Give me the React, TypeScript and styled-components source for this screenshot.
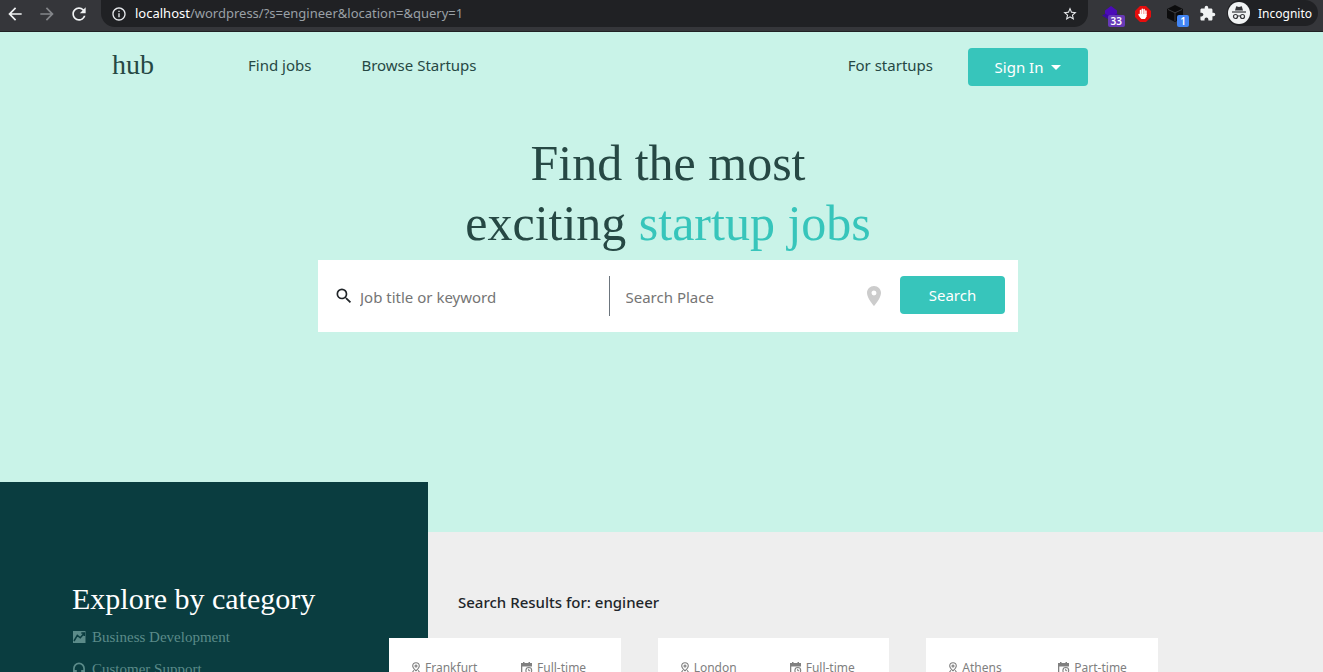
import React from "react";
import styled, { createGlobalStyle } from "styled-components";
import {
  MdArrowBack,
  MdArrowForward,
  MdRefresh,
  MdInfoOutline,
  MdStarBorder,
  MdExtension,
  MdSearch,
  MdLocationOn,
} from "react-icons/md";

const sans = `"Noto Sans", "Open Sans", sans-serif`;
const serif = `"Liberation Serif", "Times New Roman", serif`;
const teal = "#37c5bb";
const ink = "#264844";

const GlobalStyle = createGlobalStyle`
  * { box-sizing: border-box; }
  body { margin: 0; font-family: ${sans}; }
  button, input { font-family: inherit; margin: 0; }
  h1, h2, p, ul { margin: 0; padding: 0; font-weight: 400; }
  ul { list-style: none; }
  a { color: inherit; text-decoration: none; }
  svg { display: block; flex: none; }
`;

const Window = styled.div`
  display: flex;
  flex-direction: column;
  height: 100vh;
  overflow: hidden;
  background: #eeeeee;
`;

/* Browser toolbar */

const Toolbar = styled.div`
  display: flex;
  flex: none;
  align-items: flex-start;
  height: 32px;
  padding: 0 5px;
  background: #35363a;
  border-bottom: 1px solid #202124;
`;

const ToolButton = styled.button<{ $dim?: boolean }>`
  display: flex;
  align-items: center;
  justify-content: center;
  width: 32px;
  height: 27px;
  padding: 0;
  border: 0;
  background: none;
  color: ${(p) => (p.$dim ? "#84868a" : "#f1f3f4")};
`;

const NavButtons = styled.div`
  display: flex;
  width: 96px;
  margin-left: -6px;
  margin-right: 6px;
`;

const AddressBar = styled.div`
  display: flex;
  flex: 1;
  align-items: center;
  height: 27px;
  padding: 0 10px;
  gap: 8px;
  background: #202124;
  border-radius: 0 0 14px 14px;
  color: #e8eaed;
`;

const Address = styled.p`
  flex: 1;
  padding-bottom: 2px;
  font-size: 13px;
  line-height: 24px;
  color: #9aa0a6;

  b {
    font-weight: 400;
    color: #ffffff;
  }
`;

const Extensions = styled.div`
  display: flex;
  width: 128px;
  margin-left: 7px;
`;

const Extension = styled(ToolButton)`
  position: relative;
`;

const Count = styled.span<{ $color: string }>`
  position: absolute;
  right: 2px;
  top: 15px;
  padding: 0 3px;
  border-radius: 2px;
  background: ${(p) => p.$color};
  color: #ffffff;
  font-size: 10px;
  font-weight: 600;
  line-height: 12px;
`;

const Profile = styled.button`
  display: flex;
  align-items: center;
  gap: 8px;
  height: 26px;
  margin-left: 4px;
  padding: 0 6px 0 1px;
  border: 0;
  border-radius: 13px;
  background: #202124;
  color: #ffffff;
  font-size: 12px;
`;

/* Hero */

const Hero = styled.header`
  flex: none;
  height: 500px;
  background: #c9f3e8;
  color: ${ink};
`;

const Nav = styled.nav`
  display: flex;
  align-items: flex-start;
  max-width: 1088px;
  padding: 16px 0 0 112px;
  font-size: 15px;
`;

const Brand = styled.a`
  width: 136px;
  font-family: ${serif};
  font-size: 28px;
  line-height: 34px;
`;

const NavLink = styled.a`
  margin-right: 50px;
  line-height: 34px;
`;

const EndLink = styled.a`
  margin: 0 35px 0 auto;
  line-height: 34px;
`;

const Button = styled.button<{ $width: number }>`
  display: flex;
  align-items: center;
  justify-content: center;
  gap: 8px;
  width: ${(p) => p.$width}px;
  height: 38px;
  padding: 0;
  border: 0;
  border-radius: 4px;
  background: ${teal};
  color: #ffffff;
  font-size: 15px;
`;

const Caret = styled.span`
  border: 5px solid transparent;
  border-top-color: #ffffff;
  border-bottom: 0;
`;

const HeroBody = styled.div`
  display: flex;
  flex-direction: column;
  align-items: center;
  padding: 47px 0 0 13px;
`;

const Title = styled.h1`
  font-family: ${serif};
  font-size: 50px;
  line-height: 60px;
  text-align: center;

  em {
    font-style: normal;
    color: ${teal};
  }
`;

const SearchForm = styled.form`
  display: flex;
  align-items: flex-start;
  width: 100%;
  max-width: 700px;
  height: 72px;
  margin-top: 7px;
  padding: 16px 13px 16px 16px;
  background: #ffffff;
`;

const Field = styled.label<{ $divided?: boolean }>`
  display: flex;
  align-items: center;
  flex: 1;
  height: 40px;
  padding-left: ${(p) => (p.$divided ? 16 : 0)}px;
  border-left: ${(p) => (p.$divided ? "1px solid #6c757d" : "0")};
`;

const Input = styled.input`
  flex: 1;
  min-width: 0;
  height: 40px;
  padding: 2px 0 0;
  border: 0;
  outline: 0;
  background: none;
  font-size: 15px;

  &::placeholder {
    color: #757575;
    opacity: 1;
  }
`;

const SearchIcon = styled(MdSearch)`
  margin-right: 6px;
  color: #212529;
`;

const PlaceIcon = styled(MdLocationOn)`
  margin-right: 14px;
  color: #cccccc;
`;

/* Lower page */

const Content = styled.main`
  display: flex;
  flex: none;
  align-items: flex-start;
`;

const Sidebar = styled.aside`
  width: 428px;
  min-height: 600px;
  margin-top: -50px;
  padding: 95px 72px;
  background: #0a3d40;
  font-family: ${serif};
`;

const SidebarTitle = styled.h2`
  color: #ffffff;
  font-size: 30px;
  line-height: 44px;
`;

const Category = styled.a`
  display: flex;
  align-items: center;
  gap: 6px;
  height: 32px;
  color: #5b8b89;
  font-size: 15px;
`;

const Results = styled.section`
  flex: 1;
  padding: 60px 30px;
`;

const ResultsTitle = styled.h2`
  color: #212529;
  font-size: 15px;
  font-weight: 500;
  line-height: 20px;
`;

const Cards = styled.ul`
  display: grid;
  grid-template-columns: repeat(3, 1fr);
  gap: 37px;
  max-width: 769px;
  margin: 26px 0 0 -69px;
`;

const Card = styled.li`
  display: grid;
  grid-template-columns: 110px 1fr;
  position: relative;
  min-height: 240px;
  padding: 20px 22px;
  align-content: start;
  background: #ffffff;
`;

const Meta = styled.span`
  display: flex;
  align-items: center;
  gap: 4px;
  color: #808080;
  font-size: 12px;
  line-height: 20px;
`;

const PinIcon = () => (
  <svg width="10" height="12" viewBox="0 0 10 12" fill="none" stroke="currentColor" strokeWidth="1.1">
    <path d="M5 8.800C3 7 1.700 5.700 1.700 4a3.300 3.300 0 0 1 6.600 0C8.300 5.700 7 7 5 8.800Z" />
    <circle cx="5" cy="4" r="1" />
    <path d="M2.800 8.300.8 11.400H3M7.200 8.300l2 3.100H7" />
  </svg>
);

const CalendarIcon = () => (
  <svg width="12" height="12" viewBox="0 0 12 12">
    <path fill="currentColor" d="M0 1h2V0h1.500v1h4V0H9v1h2v3.600H1.300v6.100H4V12H0Z" />
    <circle cx="7.800" cy="8.400" r="2.900" fill="#ffffff" stroke="currentColor" strokeWidth="1.100" />
    <path d="M7.700 6.800v1.900h1.500" fill="none" stroke="currentColor" />
  </svg>
);

const ChartIcon = () => (
  <svg width="14" height="12" viewBox="0 0 14 12">
    <path fill="currentColor" d="M1 0h12.500v12H1Z" />
    <path
      d="M2 10 5.300 4.300l3 2.500L12 2.500M9.300 2h3v3"
      fill="none"
      stroke="#0a3d40"
      strokeWidth="1.500"
    />
  </svg>
);

const HeadphonesIcon = () => (
  <svg width="14" height="14" viewBox="0 0 14 14" fill="none" stroke="currentColor" strokeWidth="1.700">
    <path d="M1.900 12V6.500a5.100 5.100 0 0 1 10.200 0V12" />
    <path d="M3.400 8v5M10.600 8v5" strokeWidth="2.800" />
  </svg>
);

const LayersIcon = () => (
  <svg width="18" height="18" viewBox="0 0 18 18">
    <path d="m9 6 9 4.500L9 16l-9-5.500Z" fill="#3a0a9c" />
    <path d="m9 1 6 4.500v3L9 12 3 8.500v-3Z" fill="#4b0bb8" />
  </svg>
);

const BlockerIcon = () => (
  <svg width="16" height="16" viewBox="0 0 16 16">
    <path d="M5 0h6l5 5v6l-5 5H5l-5-5V5Z" fill="#e40d0d" />
    <path
      d="M5.500 9V4.500M7.300 8V3.200M9.100 8V3.500M10.900 8.500V5M4 8.500 6.500 12"
      stroke="#ffffff"
      strokeWidth="1.500"
      strokeLinecap="round"
    />
    <path d="M4.800 8h6.800v2.500L10 13H6.700L4.800 10.500Z" fill="#ffffff" />
  </svg>
);

const CubeIcon = () => (
  <svg width="16" height="17" viewBox="0 0 16 17">
    <path d="m8 0 8 4v9l-8 4-8-4V4Z" fill="#0c0c0d" />
    <path d="m1 4.500 7 3.300 7-3.300M8 8v8" stroke="#3c3d40" fill="none" />
  </svg>
);

const IncognitoIcon = () => (
  <svg width="22" height="22" viewBox="0 0 22 22">
    <circle cx="11" cy="11" r="11" fill="#f1f3f4" />
    <path d="M7 8.500 8.200 4.300 11 5l2.800-.7L15 8.500Z" fill="#35363a" />
    <path d="M4 10h14" stroke="#35363a" strokeWidth="1.200" />
    <path d="M9.500 14.300q1.500-1 3 0" stroke="#35363a" fill="none" />
    <circle cx="7.500" cy="14.500" r="2" stroke="#35363a" fill="none" strokeWidth="1.200" />
    <circle cx="14.500" cy="14.500" r="2" stroke="#35363a" fill="none" strokeWidth="1.200" />
  </svg>
);

const jobs = [
  { city: "Frankfurt", type: "Full-time" },
  { city: "London", type: "Full-time" },
  { city: "Athens", type: "Part-time" },
];

export default function App() {
  return (
    <Window>
      <GlobalStyle />
      <Toolbar>
        <NavButtons>
          <ToolButton aria-label="Back"><MdArrowBack size={20} /></ToolButton>
          <ToolButton aria-label="Forward" $dim><MdArrowForward size={20} /></ToolButton>
          <ToolButton aria-label="Reload"><MdRefresh size={20} /></ToolButton>
        </NavButtons>
        <AddressBar>
          <MdInfoOutline size={16} />
          <Address><b>localhost</b>/wordpress/?s=engineer&amp;location=&amp;query=1</Address>
          <MdStarBorder size={16} />
        </AddressBar>
        <Extensions>
          <Extension aria-label="Layers"><LayersIcon /><Count $color="#673ab7">33</Count></Extension>
          <Extension aria-label="Blocker"><BlockerIcon /></Extension>
          <Extension aria-label="Cube"><CubeIcon /><Count $color="#4285f4">1</Count></Extension>
          <Extension aria-label="Extensions"><MdExtension size={17} /></Extension>
        </Extensions>
        <Profile><IncognitoIcon />Incognito</Profile>
      </Toolbar>

      <Hero>
        <Nav>
          <Brand href="#">hub</Brand>
          <NavLink href="#jobs">Find jobs</NavLink>
          <NavLink href="#startups">Browse Startups</NavLink>
          <EndLink href="#for-startups">For startups</EndLink>
          <Button $width={120}>Sign In<Caret /></Button>
        </Nav>
        <HeroBody>
          <Title>
            Find the most<br />exciting <em>startup jobs</em>
          </Title>
          <SearchForm onSubmit={(e) => e.preventDefault()}>
            <Field>
              <SearchIcon size={20} />
              <Input aria-label="Job title or keyword" placeholder="Job title or keyword" />
            </Field>
            <Field $divided>
              <Input aria-label="Search Place" placeholder="Search Place" />
              <PlaceIcon size={24} />
            </Field>
            <Button $width={105}>Search</Button>
          </SearchForm>
        </HeroBody>
      </Hero>

      <Content>
        <Sidebar>
          <SidebarTitle>Explore by category</SidebarTitle>
          <ul>
            <li><Category href="#business"><ChartIcon />Business Development</Category></li>
            <li><Category href="#support"><HeadphonesIcon />Customer Support</Category></li>
          </ul>
        </Sidebar>
        <Results>
          <ResultsTitle>Search Results for: engineer</ResultsTitle>
          <Cards>
            {jobs.map((job) => (
              <Card key={job.city}>
                <Meta><PinIcon />{job.city}</Meta>
                <Meta><CalendarIcon />{job.type}</Meta>
              </Card>
            ))}
          </Cards>
        </Results>
      </Content>
    </Window>
  );
}
